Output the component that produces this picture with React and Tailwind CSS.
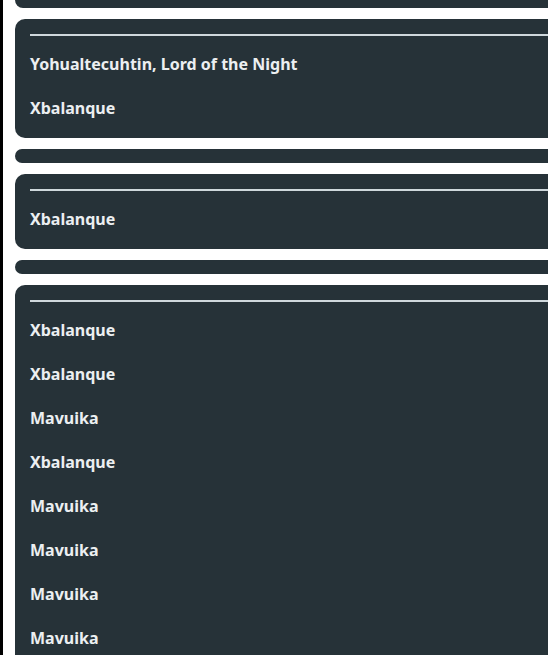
export default function App() {
  const Card = ({ items }) => (
    <div className="shrink-0 bg-[#263238] rounded-[10px] pt-[15px] pb-[8px] px-[15px]">
      <div className="h-[2px] bg-[#cfd8dc]" />
      <div className="mt-[6px]">
        {items.map((t, i) => (
          <div key={i} className="h-[44px] flex items-center text-[16px] font-bold text-[#eceff1]">
            {t}
          </div>
        ))}
      </div>
    </div>
  );
  const Bar = () => <div className="shrink-0 h-[14px] bg-[#263238] rounded-full" />;
  return (
    <div className="w-[548px] h-[655px] overflow-hidden bg-white flex items-start" style={{ fontFamily: '"Noto Sans", sans-serif' }}>
      <div className="w-[3px] h-full bg-black shrink-0" />
      <div className="pl-[12px] w-[580px] shrink-0 flex flex-col gap-[11px]">
        <div className="shrink-0 h-[8px] bg-[#263238] rounded-b-[10px]" />
        <Card items={["Yohualtecuhtin, Lord of the Night", "Xbalanque"]} />
        <Bar />
        <Card items={["Xbalanque"]} />
        <Bar />
        <Card items={["Xbalanque", "Xbalanque", "Mavuika", "Xbalanque", "Mavuika", "Mavuika", "Mavuika", "Mavuika"]} />
      </div>
    </div>
  );
}
